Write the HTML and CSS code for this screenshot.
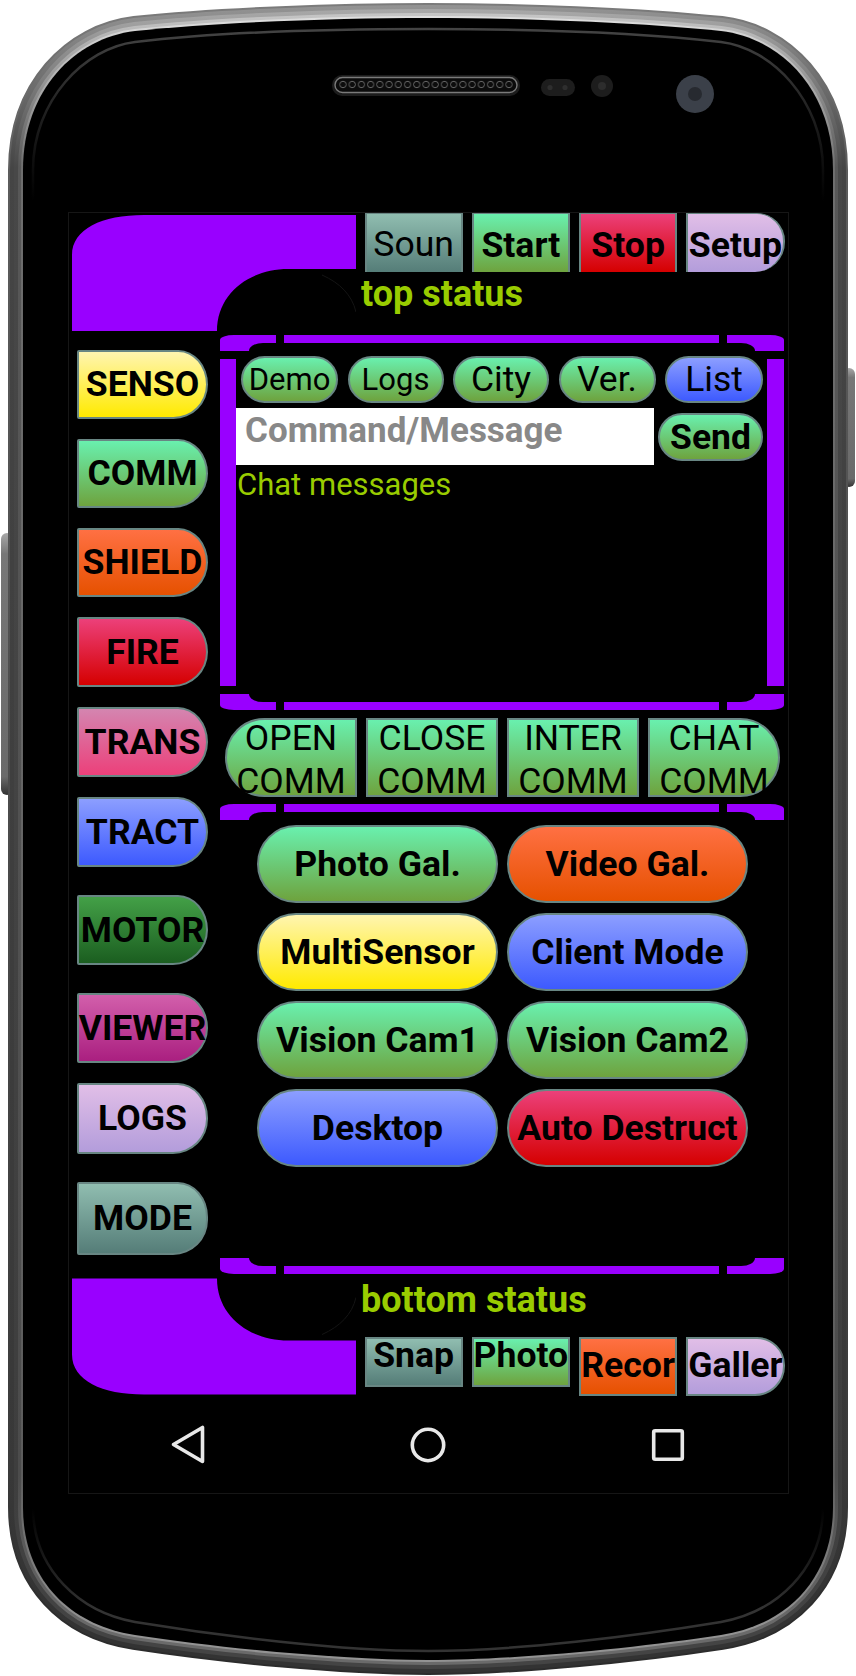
FILE: index.html
```html
<!DOCTYPE html>
<html lang="en">
<head>
<meta charset="utf-8">
<title>Robot control</title>
<link rel="stylesheet" href="styles.css">
</head>
<body>
<div class="device">
  <svg class="shell" viewBox="0 0 856 1676" width="856" height="1676" aria-hidden="true">
    <defs>
      <path id="body" d="M428 18C340 18 220 22 135 31C75 38 23 90 23 170V1507C23 1580 70 1625 135 1635C220 1648 340 1660 428 1660C516 1660 636 1648 721 1635C786 1625 833 1580 833 1507V170C833 90 781 38 721 31C636 22 516 18 428 18Z"/>
      <linearGradient id="b1" gradientUnits="userSpaceOnUse" x1="0" y1="0" x2="0" y2="1676"><stop offset="0" stop-color="#7c7c7c"/><stop offset=".1" stop-color="#5c5c5c"/><stop offset=".88" stop-color="#3a3a3a"/><stop offset=".97" stop-color="#2c2c2c"/></linearGradient>
      <linearGradient id="b2" gradientUnits="userSpaceOnUse" x1="0" y1="0" x2="0" y2="1676"><stop offset="0" stop-color="#969696"/><stop offset=".1" stop-color="#454545"/><stop offset=".88" stop-color="#383838"/><stop offset=".97" stop-color="#333"/></linearGradient>
      <linearGradient id="b3" gradientUnits="userSpaceOnUse" x1="0" y1="0" x2="0" y2="1676"><stop offset="0" stop-color="#aeaeae"/><stop offset=".1" stop-color="#484848"/><stop offset=".88" stop-color="#3e3e3e"/><stop offset=".97" stop-color="#444"/></linearGradient>
      <linearGradient id="b4" gradientUnits="userSpaceOnUse" x1="0" y1="0" x2="0" y2="1676"><stop offset="0" stop-color="#cfcfcf"/><stop offset=".1" stop-color="#585858"/><stop offset=".88" stop-color="#4c4c4c"/><stop offset=".97" stop-color="#6a6a6a"/></linearGradient>
      <linearGradient id="b5" gradientUnits="userSpaceOnUse" x1="0" y1="0" x2="0" y2="1676"><stop offset="0" stop-color="#ececec"/><stop offset=".1" stop-color="#6e6e6e"/><stop offset=".88" stop-color="#5c5c5c"/><stop offset=".97" stop-color="#939393"/></linearGradient>
      <linearGradient id="b6" gradientUnits="userSpaceOnUse" x1="0" y1="0" x2="0" y2="1676"><stop offset="0" stop-color="#505050"/><stop offset=".07" stop-color="#1e1e1e"/><stop offset=".12" stop-color="#000"/><stop offset=".9" stop-color="#000"/><stop offset=".96" stop-color="#333"/></linearGradient>
      <linearGradient id="key" x1="0" y1="0" x2="0" y2="1"><stop offset="0" stop-color="#a8a8a8"/><stop offset=".08" stop-color="#777"/><stop offset=".93" stop-color="#6a6a6a"/><stop offset="1" stop-color="#333"/></linearGradient>
      <pattern id="holes" x="338.4" y="78" width="9.22" height="13" patternUnits="userSpaceOnUse"><circle cx="4.6" cy="6.5" r="3.2" fill="#0c0c0c" stroke="#6c6c6c" stroke-width=".9"/></pattern>
    </defs>
    <rect x="1" y="533" width="12" height="262" rx="6" fill="url(#key)"/>
    <rect x="843" y="368" width="12" height="119" rx="6" fill="url(#key)"/>
    <use href="#body" fill="none" stroke="url(#b1)" stroke-width="30"/>
    <use href="#body" fill="none" stroke="url(#b2)" stroke-width="26"/>
    <use href="#body" fill="none" stroke="url(#b3)" stroke-width="18"/>
    <use href="#body" fill="none" stroke="url(#b4)" stroke-width="10"/>
    <use href="#body" fill="none" stroke="url(#b5)" stroke-width="4"/>
    <use href="#body" fill="#000"/>
    <path d="M428 29C340 29 220 32 135 42C85 48 33 100 33 170V1507C33 1570 80 1612 135 1622C220 1636 340 1651 428 1651C516 1651 636 1636 721 1622C776 1612 823 1570 823 1507V170C823 100 771 48 721 42C636 32 516 29 428 29Z" fill="#000" stroke="url(#b6)" stroke-width="2.5"/>
    <rect x="332" y="75" width="188" height="21" rx="10" fill="#1c1c1c"/>
    <rect x="335" y="77.5" width="182" height="15" rx="7.5" fill="#0b0b0b" stroke="#7a7a7a" stroke-width="1.4"/>
    <rect x="338.4" y="78" width="175" height="13" fill="url(#holes)"/>
    <rect x="541" y="79" width="34" height="17" rx="8.5" fill="#1d1d1d"/>
    <circle cx="550" cy="87.5" r="2.6" fill="#2e2e2e"/>
    <circle cx="565" cy="87.5" r="2.6" fill="#2e2e2e"/>
    <circle cx="602" cy="86" r="11" fill="#1d1d1d"/>
    <circle cx="602" cy="86" r="4" fill="#2d2d2d"/>
    <circle cx="695" cy="94" r="19" fill="#3b4049"/>
    <circle cx="695" cy="94" r="7" fill="#272a30"/>
  </svg>

  <main class="screen">
    <header class="deck">
      <svg class="elbow" viewBox="0 0 284 116" width="284" height="116" aria-hidden="true">
        <path class="elbow-fill" d="M0 116V40C0 14 30 0 72 0H284V54H216C178 54 145 78 145 116Z"/>
        <path class="elbow-arc" d="M250 60C268 68 280 80 284 97"/>
      </svg>
      <div class="deck-col">
        <div class="tools tools-top">
          <div class="key slate">Soun</div>
          <div class="key green bold lowered">Start</div>
          <div class="key red bold lowered">Stop</div>
          <div class="key lavender bold end lowered">Setup</div>
        </div>
        <div class="status status-top">top status</div>
      </div>
    </header>

    <div class="middle">
      <nav class="side">
        <div class="key side-key short yellow">SENSO</div>
        <div class="key side-key short green">COMM</div>
        <div class="key side-key short orange">SHIELD</div>
        <div class="key side-key red">FIRE</div>
        <div class="key side-key pink">TRANS</div>
        <div class="key side-key blue">TRACT</div>
        <div class="key side-key spaced forest">MOTOR</div>
        <div class="key side-key spaced magenta">VIEWER</div>
        <div class="key side-key taller lavender">LOGS</div>
        <div class="key side-key tallest spaced slate">MODE</div>
      </nav>

      <div class="panel">
        <section class="frame">
          <div class="edge"><span class="corner"></span><span class="edge-bar"></span><span class="corner mirror"></span></div>
          <div class="frame-body">
            <span class="rail"></span>
            <div class="console">
              <div class="pills">
                <div class="key pill green small">Demo</div>
                <div class="key pill green small">Logs</div>
                <div class="key pill green">City</div>
                <div class="key pill green">Ver.</div>
                <div class="key pill blue">List</div>
              </div>
              <div class="command">
                <div class="command-input">Command/Message</div>
                <div class="key pill green bold send">Send</div>
              </div>
              <div class="chat">Chat messages</div>
            </div>
            <span class="rail rail-right"></span>
          </div>
          <div class="edge flip"><span class="corner"></span><span class="edge-bar"></span><span class="corner mirror"></span></div>
        </section>

        <div class="comms">
          <div class="key comm green start">OPEN<br>COMM</div>
          <div class="key comm green">CLOSE<br>COMM</div>
          <div class="key comm green">INTER<br>COMM</div>
          <div class="key comm green end">CHAT<br>COMM</div>
        </div>

        <section class="frame frame-open">
          <div class="edge"><span class="corner"></span><span class="edge-bar"></span><span class="corner mirror"></span></div>
          <div class="launcher">
            <div class="key big green">Photo Gal.</div>
            <div class="key big orange">Video Gal.</div>
            <div class="key big yellow">MultiSensor</div>
            <div class="key big blue">Client Mode</div>
            <div class="key big green">Vision Cam1</div>
            <div class="key big green">Vision Cam2</div>
            <div class="key big blue">Desktop</div>
            <div class="key big red">Auto Destruct</div>
          </div>
          <div class="edge flip"><span class="corner"></span><span class="edge-bar"></span><span class="corner mirror"></span></div>
        </section>
      </div>
    </div>

    <footer class="deck deck-bottom">
      <svg class="elbow elbow-flip" viewBox="0 0 284 116" width="284" height="117" aria-hidden="true">
        <path class="elbow-fill" d="M0 116V40C0 14 30 0 72 0H284V54H216C178 54 145 78 145 116Z"/>
        <path class="elbow-arc" d="M250 60C268 68 280 80 284 97"/>
      </svg>
      <div class="deck-col">
        <div class="status status-bottom">bottom status</div>
        <div class="tools">
          <div class="key slate bold clip">Snap</div>
          <div class="key green bold clip">Photo</div>
          <div class="key orange bold raised">Recor</div>
          <div class="key lavender bold end raised">Galler</div>
        </div>
      </div>
    </footer>

    <div class="navbar">
      <svg class="nav-icon" viewBox="0 0 40 40" width="40" height="40" aria-hidden="true"><path d="M5.5 19.5 34.5 2.5V36.5Z"/></svg>
      <svg class="nav-icon" viewBox="0 0 40 40" width="40" height="40" aria-hidden="true"><circle cx="20" cy="20" r="15.7"/></svg>
      <svg class="nav-icon" viewBox="0 0 40 40" width="40" height="40" aria-hidden="true"><rect x="5.7" y="5.7" width="28.6" height="28.6" rx="1.5"/></svg>
    </div>
  </main>
</div>
</body>
</html>
```

FILE: styles.css
```css
* { box-sizing: border-box; }

html, body { margin: 0; background: #fff; }

body {
  font-family: Roboto, "Liberation Sans", sans-serif;
  overflow: hidden;
}

.device {
  position: relative;
  width: 856px;
  height: 1676px;
  padding: 212px 0 0 68px;
}

.shell { position: absolute; left: 0; top: 0; display: block; }

.screen {
  position: relative;
  width: 721px;
  height: 1282px;
  border: 1px solid #161616;
  background: #000;
}

/* shared button */
.key {
  display: flex;
  align-items: center;
  justify-content: center;
  border: 2px solid #688683;
  color: #000;
  font-size: 35.6px;
  line-height: 41px;
  text-align: center;
  white-space: nowrap;
}
.bold { font-weight: 700; }
.end { border-radius: 0 28px 30px 0; }
.start { border-radius: 40px 0 0 40px; }

.green { background: linear-gradient(#69f0ae, #6ea33e); }
.yellow { background: linear-gradient(#fff5b0, #ffea00); }
.orange { background: linear-gradient(#ff7043, #e65100); }
.red { background: linear-gradient(#ec407a, #d50000); }
.pink { background: linear-gradient(#d485b0, #ec407a); }
.blue { background: linear-gradient(#8c9eff, #3d5afe); }
.forest { background: linear-gradient(#43a047, #1b5e20); }
.magenta { background: linear-gradient(#d25fab, #aa1f80); }
.lavender { background: linear-gradient(#e1bee7, #b39ddb); }
.slate { background: linear-gradient(#90bdb0, #557d78); }

/* header and footer decks */
.deck { display: flex; align-items: flex-start; height: 118px; }
.deck-bottom { height: 118px; margin-top: 4px; }

.elbow { display: block; flex: none; margin: 2px 0 0 3px; }
.elbow-flip { margin-top: 0; transform: scaleY(-1); }
.elbow-fill { fill: #9900ff; }
.elbow-arc { fill: none; stroke: #141414; stroke-width: 1; }

.deck-col { margin-left: 5px; width: 423px; }

.tools {
  display: grid;
  grid-template-columns: repeat(4, 98.25px);
  grid-template-rows: 59px;
  column-gap: 9px;
  margin-left: 3.5px;
}
.tools-top .key { border-width: 1px 2px 0; padding-top: 2px; }
.tools-top .lowered { padding-top: 4px; }
.tools .clip { align-self: start; height: 50px; align-items: flex-start; line-height: 33px; }
.tools .raised { padding-bottom: 3px; }

.status {
  color: #99cc00;
  font-size: 36px;
  font-weight: 700;
  line-height: 41px;
}
.status-top { padding-top: 2px; }
.status-bottom { height: 59px; padding-top: 2px; }

/* main area */
.middle { display: flex; align-items: flex-start; }

.side {
  display: flex;
  flex-direction: column;
  gap: 20px;
  flex: none;
  margin: 19px 0 0 8px;
  width: 131px;
}

.side-key {
  height: 70px;
  flex: none;
  font-weight: 700;
  border-radius: 2px 30px 35px 2px / 2px 35px 35px 2px;
}
.short { height: 69px; }
.taller { height: 71px; }
.tallest { height: 73px; }
.spaced { margin-top: 8px; }

.panel { flex: none; width: 564px; margin: 4px 0 0 12px; }

/* purple frames */
.edge { display: flex; height: 16px; }
.edge.flip { transform: scaleY(-1); }

.corner {
  position: relative;
  flex: none;
  width: 56px;
  height: 16px;
  background: #9900ff;
  border-top-left-radius: 14px 5px;
}
.corner::after {
  content: "";
  position: absolute;
  left: 29px;
  right: 0;
  top: 8px;
  bottom: 0;
  background: #000;
  border-top-left-radius: 14px 8px;
}
.corner.mirror { width: 57px; transform: scaleX(-1); }

.edge-bar { flex: 1; height: 8px; margin: 0 8px; background: #9900ff; }

.frame-body { display: flex; height: 343px; }

.rail { flex: none; width: 16px; margin: 8px 0; background: #9900ff; }
.rail-right { width: 17px; }

.console { flex: 1; padding: 5px 4px 0 0; }

.pills {
  display: grid;
  grid-template-columns: 97px 96px 96px 97px 98px;
  justify-content: space-between;
  margin-left: 5px;
}

.pill { height: 47px; border-radius: 24px; font-size: 35.5px; }
.small { font-size: 31px; }

.command { display: flex; align-items: flex-start; gap: 4px; margin-top: 5px; }

.command-input {
  width: 418px;
  height: 57px;
  padding: 2px 0 0 9px;
  background: #fff;
  color: #888;
  font-size: 35px;
  font-weight: 700;
  line-height: 41px;
}

.send { flex: 1; height: 48px; margin-top: 5px; }

.chat {
  margin-left: 1px;
  padding-top: 2px;
  color: #99cc00;
  font-size: 31px;
  line-height: 36px;
}

.comms {
  display: grid;
  grid-template-columns: repeat(4, 132px);
  column-gap: 9px;
  margin: 8px 0 7px 5px;
}

.comm {
  height: 79px;
  padding-top: 4px;
  font-size: 35.5px;
  line-height: 43px;
}
.comm.end { border-radius: 0 40px 40px 0; }

.launcher {
  display: grid;
  grid-template-columns: repeat(2, 241px);
  grid-auto-rows: 78px;
  gap: 10px 9px;
  height: 438px;
  padding: 5px 0 0 37px;
}

.big { border-radius: 39px; font-weight: 700; }

/* system navigation */
.navbar {
  display: grid;
  grid-template-columns: repeat(3, 240px);
  justify-items: center;
  margin: 29px 0 0 -1px;
}

.nav-icon { display: block; fill: none; stroke: #e8e8e8; stroke-width: 3.6; stroke-linejoin: round; }
```
